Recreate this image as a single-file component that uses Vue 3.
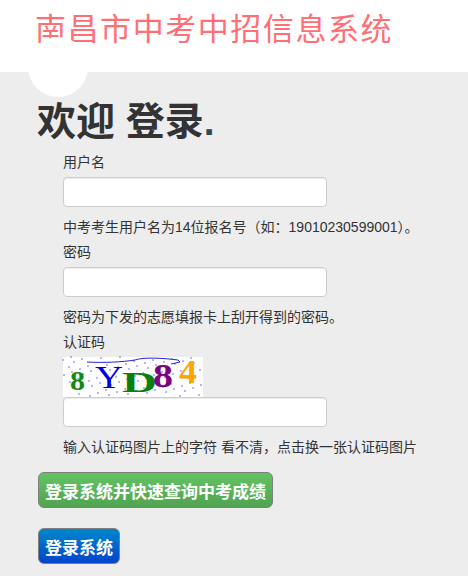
<template>
  <div class="page">
    <header class="top">
      <div class="site-title">南昌市中考中招信息系统</div>
    </header>
    <main class="content">
      <span class="circle"></span>
      <h1 class="welcome">欢迎 登录<span class="dot">.</span></h1>
      <form class="login-form" @submit.prevent>
        <label class="field-label">用户名</label>
        <input class="field-input" type="text" />
        <p class="hint">中考考生用户名为14位报名号（如：19010230599001）。</p>

        <label class="field-label">密码</label>
        <input class="field-input" type="password" />
        <p class="hint">密码为下发的志愿填报卡上刮开得到的密码。</p>

        <label class="field-label">认证码</label>
        <svg class="captcha" width="140" height="40" viewBox="0 0 140 40">
          <rect width="140" height="40" fill="#fff" />
          <circle v-for="(d, i) in dots" :key="i" :cx="d[0]" :cy="d[1]" r="0.8" fill="#5a5af0" />
          <path d="M24 5 C40 6 60 5 72 3 C80 0 100 1 115 3 L117 5 L108 7" fill="none" stroke="#2222dd" stroke-width="1" />
          <text x="7" y="33" class="cap" font-size="27" font-weight="700" fill="#118a11" textLength="15" lengthAdjust="spacingAndGlyphs">8</text>
          <text x="32" y="31" class="cap" font-size="32" fill="#0000e6" textLength="28" lengthAdjust="spacingAndGlyphs">Y</text>
          <text x="59" y="35" class="cap" font-size="30" fill="#0a800a" font-weight="700" textLength="35" lengthAdjust="spacingAndGlyphs">D</text>
          <text x="90" y="30" class="cap" font-size="33" font-weight="700" fill="#800080" textLength="20" lengthAdjust="spacingAndGlyphs">8</text>
          <text x="116" y="26" class="cap" font-size="33" font-weight="700" fill="#ffa500" textLength="18" lengthAdjust="spacingAndGlyphs">4</text>
        </svg>
        <input class="field-input" type="text" />
        <p class="hint">输入认证码图片上的字符 看不清，点击换一张认证码图片</p>

        <div class="actions">
          <button class="btn btn-green" type="button">登录系统并快速查询中考成绩</button>
          <button class="btn btn-blue" type="button">登录系统</button>
        </div>
      </form>
    </main>
  </div>
</template>

<script setup>
// 验证码背景噪点
const dots = []
for (let i = 0; i < 80; i++) {
  dots.push([(i * 37 + 11) % 139, (i * 23 + 5) % 40])
}
</script>

<style>
html,
body {
  margin: 0;
  background: #ededed;
}
</style>

<style scoped>
.page {
  width: 468px;
  height: 576px;
  overflow: hidden;
  font-family: "Liberation Sans", "Noto Sans CJK SC", sans-serif;
  font-size: 14px;
  color: #333;
  background: #ededed;
}

.top {
  height: 72px;
  background: #fff;
  box-sizing: border-box;
  padding: 7px 0 0 35px;
}

.site-title {
  font-family: "Noto Sans CJK SC", sans-serif;
  font-weight: 400;
  font-size: 31px;
  letter-spacing: 1.55px;
  line-height: 40px;
  color: #ff6f75;
  white-space: nowrap;
}

.content {
  position: relative;
  padding: 0 0 0 37px;
}

.circle {
  position: absolute;
  left: 28px;
  top: -35px;
  width: 60px;
  height: 60px;
  border-radius: 50%;
  background: #fff;
}

.welcome {
  margin: 0;
  padding-top: 26px;
  font-size: 39px;
  line-height: 48px;
  font-weight: 700;
  color: #333;
}

.dot {
  color: #2a4a55;
}

.login-form {
  display: flex;
  flex-direction: column;
  align-items: flex-start;
  padding: 6px 0 0 26px;
}

.field-label {
  line-height: 20px;
  height: 20px;
  margin-bottom: 5px;
}

.field-input {
  box-sizing: border-box;
  width: 264px;
  height: 30px;
  padding: 4px 8px;
  background: #fff;
  border: 1px solid #ccc;
  border-radius: 4px;
  box-shadow: inset 0 1px 1px rgba(0, 0, 0, 0.075);
  outline: none;
}

.hint {
  margin: 10px 0 0;
  height: 25px;
  line-height: 20px;
  white-space: nowrap;
}

.captcha {
  display: block;
  overflow: visible;
}

.cap {
  font-family: "Liberation Serif", serif;
}

.actions {
  display: flex;
  flex-direction: column;
  align-items: flex-start;
  gap: 20px;
  margin-left: -25px;
  padding-top: 10px;
}

.btn {
  box-sizing: border-box;
  height: 36px;
  padding: 0 6px;
  border: 1px solid #7f7f7f;
  border-radius: 6px;
  font-family: "Liberation Sans", "Noto Sans CJK SC", sans-serif;
  font-size: 17px;
  font-weight: 700;
  color: #fff;
  white-space: nowrap;
}

.btn-green {
  background: linear-gradient(to bottom, #62c462, #51a351);
}

.btn-blue {
  background: linear-gradient(to bottom, #0088cc, #0044cc);
}
</style>
